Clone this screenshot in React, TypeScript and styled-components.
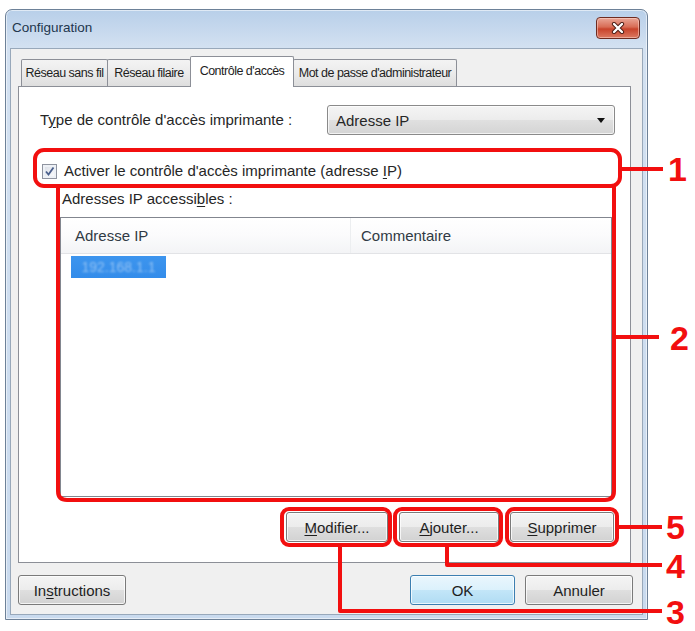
import React from "react";
import styled, { createGlobalStyle } from "styled-components";

const FONT = `"Liberation Sans", Arial, sans-serif`;
const RED = "#f20f0f";

const GlobalStyle = createGlobalStyle`
  html, body {
    margin: 0;
    padding: 0;
    background: #ffffff;
  }
  body {
    font-family: ${FONT};
    color: #262626;
  }
`;

const Page = styled.div`
  position: relative;
  width: 695px;
  height: 631px;
  box-sizing: border-box;
  padding: 9px 0 0 5px;
  overflow: hidden;
`;

const Window = styled.div`
  width: 643px;
  height: 611px;
  box-sizing: border-box;
  border: 1px solid #6d8198;
  border-radius: 7px 7px 0 0;
  background: linear-gradient(#b8cfe9, #d3e1f1 38px, #c9daee);
  box-shadow: inset 0 0 0 1px rgba(255, 255, 255, 0.55);
  padding: 0 4px 4px 4px;
  display: flex;
  flex-direction: column;
`;

const TitleBar = styled.div`
  height: 38px;
  display: flex;
  justify-content: space-between;
  align-items: flex-start;
`;

const Title = styled.span`
  padding: 9px 0 0 2px;
  font-size: 13.5px;
  line-height: 18px;
  color: #22364d;
`;

const CloseButton = styled.div`
  margin: 7px 3px 0 0;
  width: 44px;
  height: 22px;
  box-sizing: border-box;
  border: 1px solid #6e2b20;
  border-radius: 4px;
  background: linear-gradient(#eaa797, #d86c55 45%, #c8432b 55%, #dc7a62);
  box-shadow: inset 0 0 0 1px rgba(255, 220, 210, 0.5);
  display: flex;
  align-items: center;
  justify-content: center;
`;

const Client = styled.div`
  flex: 1;
  background: #f0f0f0;
  border: 1px solid #98a8ba;
  padding: 7px 0 0 7px;
  display: flex;
  flex-direction: column;
`;

const TabStrip = styled.div`
  height: 30px;
  padding-left: 4px;
  display: flex;
  align-items: flex-end;
`;

const Tab = styled.div<{ $w: number; $active?: boolean }>`
  position: relative;
  z-index: ${(p) => (p.$active ? 2 : 1)};
  width: ${(p) => p.$w}px;
  height: ${(p) => (p.$active ? 31 : 27)}px;
  margin-left: -1px;
  margin-bottom: ${(p) => (p.$active ? -1 : 0)}px;
  box-sizing: border-box;
  border: 1px solid #8c8f97;
  border-bottom: none;
  border-radius: 2px 2px 0 0;
  background: ${(p) =>
    p.$active ? "#ffffff" : "linear-gradient(#f3f3f3, #ebebeb 50%, #dedede)"};
  display: flex;
  align-items: center;
  justify-content: center;
  padding-bottom: ${(p) => (p.$active ? 3 : 0)}px;
  font-size: 12.5px;
  letter-spacing: -0.5px;
  color: #1e1e1e;
  white-space: nowrap;
`;

const Panel = styled.div`
  width: 613px;
  height: 477px;
  box-sizing: border-box;
  border: 1px solid #8c8f97;
  background: #ffffff;
  padding: 18px 15px 0 21px;
  display: flex;
  flex-direction: column;
`;

const TypeRow = styled.div`
  height: 30px;
  display: flex;
  align-items: center;
  justify-content: space-between;
`;

const Label = styled.span`
  font-size: 15px;
  line-height: 18px;
  white-space: nowrap;
`;

const Key = styled.span`
  text-decoration: underline;
  text-underline-offset: 2px;
`;

const Combo = styled.div`
  width: 288px;
  height: 30px;
  box-sizing: border-box;
  border: 1px solid #8a8a8a;
  border-radius: 3px;
  background: linear-gradient(#f4f4f4, #ececec 50%, #e0e0e0 50%, #d4d4d4);
  box-shadow: inset 0 0 0 1px rgba(255, 255, 255, 0.7);
  display: flex;
  align-items: center;
  justify-content: space-between;
  padding: 0 9px 0 8px;
  font-size: 15px;
`;

const Arrow = styled.span`
  width: 0;
  height: 0;
  border-left: 4.5px solid transparent;
  border-right: 4.5px solid transparent;
  border-top: 5px solid #111;
`;

const CheckRow = styled.div`
  margin-top: 26px;
  height: 20px;
  display: flex;
  align-items: center;
  gap: 7px;
`;

const CheckBox = styled.div`
  margin-left: 2px;
  width: 15px;
  height: 15px;
  box-sizing: border-box;
  border: 1px solid #8f94a0;
  background: linear-gradient(135deg, #d6dbe4, #ffffff);
  box-shadow: inset 0 0 0 2px #eef1f6;
  display: flex;
  align-items: center;
  justify-content: center;
`;

const GroupLabel = styled(Label)`
  margin: 9px 0 0 22px;
`;

const ListView = styled.div`
  margin: 9px 0 0 20px;
  width: 552px;
  height: 280px;
  box-sizing: border-box;
  border: 1px solid #82868f;
  background: #ffffff;
  display: flex;
  flex-direction: column;
`;

const Header = styled.div`
  height: 36px;
  box-sizing: border-box;
  border-bottom: 1px solid #e2e3e6;
  background: linear-gradient(#ffffff, #fbfbfc 50%, #f3f4f6);
  display: flex;
`;

const HeaderCell = styled.div<{ $w?: number }>`
  ${(p) => (p.$w ? `width: ${p.$w}px;` : "flex: 1;")}
  box-sizing: border-box;
  padding-left: ${(p) => (p.$w ? 14 : 10)}px;
  border-right: ${(p) => (p.$w ? "1px solid #eceef0" : "none")};
  display: flex;
  align-items: center;
  font-size: 15px;
  color: #303a44;
`;

const Item = styled.div`
  margin: 2px 0 0 10px;
  width: 95px;
  height: 22px;
  background: linear-gradient(#3d95ee, #338cea);
  display: flex;
  align-items: center;
  justify-content: center;
  overflow: hidden;
`;

const Obscured = styled.span`
  font-size: 14px;
  color: rgba(255, 255, 255, 0.45);
  filter: blur(1.3px);
`;

const ButtonRow = styled.div`
  margin-top: 15px;
  padding-right: 1px;
  height: 30px;
  display: flex;
  justify-content: flex-end;
  gap: 11px;
`;

const BottomRow = styled.div`
  margin-top: 12px;
  width: 615px;
  height: 30px;
  display: flex;
  gap: 10px;
`;

const Button = styled.div<{ $w: number; $default?: boolean; $push?: boolean }>`
  width: ${(p) => p.$w}px;
  height: 30px;
  box-sizing: border-box;
  ${(p) => (p.$push ? "margin-right: auto;" : "")}
  border: 1px solid ${(p) => (p.$default ? "#3c7fb1" : "#7a7a7a")};
  border-radius: 3px;
  background: ${(p) =>
    p.$default
      ? "linear-gradient(#eaf6fd, #dbf1fc 50%, #c3e6f8 50%, #b0dcf3)"
      : "linear-gradient(#f4f4f4, #ececec 50%, #dfdfdf 50%, #d2d2d2)"};
  box-shadow: inset 0 0 0 1px rgba(255, 255, 255, 0.75);
  display: flex;
  align-items: center;
  justify-content: center;
  font-size: 15px;
  color: #1e1e1e;
`;

/* red callouts drawn over the screenshot */
const Callouts = styled.svg`
  position: absolute;
  left: 0;
  top: 0;
  pointer-events: none;
`;

const Digit = styled.span<{ $x: number; $y: number }>`
  position: absolute;
  left: ${(p) => p.$x}px;
  top: ${(p) => p.$y}px;
  font: bold 34px/34px ${FONT};
  color: ${RED};
`;

const digits = [
  { n: "1", x: 668, y: 152 },
  { n: "2", x: 670, y: 321 },
  { n: "5", x: 666, y: 510 },
  { n: "4", x: 666, y: 549 },
  { n: "3", x: 666, y: 595 },
];

export default function App() {
  return (
    <>
      <GlobalStyle />
      <Page>
        <Window>
          <TitleBar>
            <Title>Configuration</Title>
            <CloseButton>
              <svg width="14" height="12" viewBox="0 0 14 12">
                <path d="M3 2 L11 10 M11 2 L3 10" stroke="#4a1a12" strokeWidth="4.2" strokeLinecap="round" />
                <path d="M3 2 L11 10 M11 2 L3 10" stroke="#ffffff" strokeWidth="2.4" strokeLinecap="round" />
              </svg>
            </CloseButton>
          </TitleBar>
          <Client>
            <TabStrip>
              <Tab $w={87}>Réseau sans fil</Tab>
              <Tab $w={84}>Réseau filaire</Tab>
              <Tab $w={104} $active>
                Contrôle d'accès
              </Tab>
              <Tab $w={164}>Mot de passe d'administrateur</Tab>
            </TabStrip>
            <Panel>
              <TypeRow>
                <Label>
                  T<Key>y</Key>pe de contrôle d'accès imprimante :
                </Label>
                <Combo>
                  <span>Adresse IP</span>
                  <Arrow />
                </Combo>
              </TypeRow>
              <CheckRow>
                <CheckBox>
                  <svg width="11" height="11" viewBox="0 0 11 11">
                    <path d="M2 5.5 L4.5 8.5 L9.5 1.5" fill="none" stroke="#4a5f8c" strokeWidth="1.8" />
                  </svg>
                </CheckBox>
                <Label>
                  Activer le contrôle d'accès imprimante (adresse <Key>I</Key>P)
                </Label>
              </CheckRow>
              <GroupLabel>
                Adresses IP accessi<Key>b</Key>les :
              </GroupLabel>
              <ListView>
                <Header>
                  <HeaderCell $w={290}>Adresse IP</HeaderCell>
                  <HeaderCell>Commentaire</HeaderCell>
                </Header>
                <Item>
                  <Obscured>192.168.1.1</Obscured>
                </Item>
              </ListView>
              <ButtonRow>
                <Button $w={102}>
                  <span>
                    <Key>M</Key>odifier...
                  </span>
                </Button>
                <Button $w={100}>
                  <span>
                    <Key>A</Key>jouter...
                  </span>
                </Button>
                <Button $w={104}>
                  <span>
                    <Key>S</Key>upprimer
                  </span>
                </Button>
              </ButtonRow>
            </Panel>
            <BottomRow>
              <Button $w={108} $push>
                <span>
                  In<Key>s</Key>tructions
                </span>
              </Button>
              <Button $w={105} $default>
                OK
              </Button>
              <Button $w={108}>Annuler</Button>
            </BottomRow>
          </Client>
        </Window>

        <Callouts width="695" height="631" viewBox="0 0 695 631">
          <g fill="none" stroke={RED} strokeWidth="4" strokeLinejoin="round">
            <rect x="35" y="150" width="585" height="36" rx="9" />
            <path d="M58 186 V491 Q58 500 67 500 H605 Q614 500 614 491 V186" />
            <rect x="282" y="509" width="108" height="36" rx="7" />
            <rect x="395" y="509" width="106" height="36" rx="7" />
            <rect x="507" y="509" width="110" height="36" rx="7" />
            <path d="M620 169 H663" />
            <path d="M614 337 H659" />
            <path d="M617 527 H662" />
            <path d="M447 545 V565 H662" />
            <path d="M340 545 V611 H662" />
          </g>
        </Callouts>
        {digits.map((d) => (
          <Digit key={d.n} $x={d.x} $y={d.y}>
            {d.n}
          </Digit>
        ))}
      </Page>
    </>
  );
}
